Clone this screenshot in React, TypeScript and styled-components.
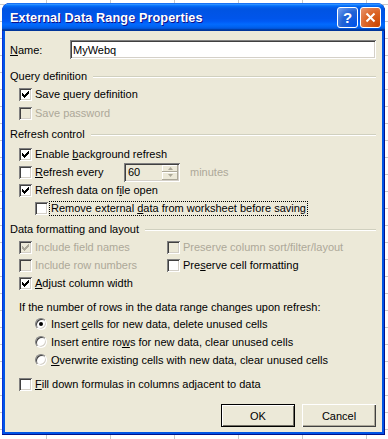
import React from 'react';
import styled, { createGlobalStyle, css } from 'styled-components';

const GlobalStyle = createGlobalStyle`
    html, body {
        margin: 0;
        height: 100%;
    }
    body {
        background-color: #ffffff;
        background-image:
            linear-gradient(to right, #c8c8c8 1px, transparent 1px),
            linear-gradient(to bottom, #c8c8c8 1px, transparent 1px);
        background-size: 64px 17px;
        background-position: 46px 4px;
        font-family: 'Liberation Sans', Arial, sans-serif;
        font-size: 11px;
        color: #000;
    }
`;

const DISABLED = '#aca899';
const FACE = '#ece9d8';

const sunken = css`
    box-shadow:
        inset 1px 1px #808080,
        inset -1px -1px #ffffff,
        inset 2px 2px #404040,
        inset -2px -2px #d4d0c8;
`;

const StyledWindow = styled.div`
    margin: 3px 0 0 2px;
    width: 383px;
    height: 432px;
    box-sizing: border-box;
    display: flex;
    flex-direction: column;
    background: #0055e5;
    border-radius: 8px 8px 0 0;
    padding: 0 3px 3px 3px;
    box-shadow:
        inset -1px -1px #00138c,
        inset 1px 0 #0831d9;
    overflow: hidden;
`;

const StyledTitleBar = styled.div`
    height: 28px;
    margin: 0 -3px;
    padding: 0 4px 0 8px;
    display: flex;
    align-items: center;
    border-radius: 8px 8px 0 0;
    background: linear-gradient(
        to bottom,
        #0058ee 0%,
        #3593ff 4%,
        #288eff 6%,
        #127dff 8%,
        #036ffc 10%,
        #0262ee 14%,
        #0057e5 20%,
        #0054e3 24%,
        #0055eb 56%,
        #005bf5 66%,
        #026afe 76%,
        #0062ef 86%,
        #0052d6 92%,
        #0040ab 94%,
        #003092 100%
    );
`;

const StyledTitle = styled.div`
    flex: 1;
    color: #ffffff;
    font-weight: bold;
    font-size: 12.7px;
    letter-spacing: 0.1px;
    text-shadow: 1px 1px #0f1089;
    margin-top: 1px;
`;

const StyledCaptionButton = styled.div<{ $kind: 'help' | 'close' }>`
    width: 21px;
    height: 21px;
    box-sizing: border-box;
    border: 1px solid #ffffff;
    border-radius: 3px;
    margin-left: 2px;
    display: flex;
    align-items: center;
    justify-content: center;
    color: #ffffff;
    font-weight: bold;
    font-size: 15px;
    background: ${({ $kind }) =>
        $kind === 'close'
            ? 'radial-gradient(circle at 90% 90%, #cc4600 0%, #dc6527 55%, #e58b62 90%)'
            : 'radial-gradient(circle at 90% 90%, #0054e9 0%, #2263d5 55%, #6696eb 90%)'};
`;

const StyledBody = styled.div`
    flex: 1;
    background: ${FACE};
    padding: 9px 6px 5px 5px;
    display: flex;
    flex-direction: column;
`;

const StyledNameRow = styled.div`
    height: 19px;
    display: flex;
    align-items: center;
`;

const StyledNameLabel = styled.span`
    width: 60px;
`;

const StyledTextBox = styled.div`
    flex: 1;
    height: 19px;
    background: #ffffff;
    ${sunken};
    display: flex;
    align-items: center;
    padding-left: 3px;
`;

const StyledGroupHeader = styled.div<{ $top: number }>`
    height: 18px;
    margin-top: ${({ $top }) => $top}px;
    display: flex;
    align-items: center;
    gap: 6px;

    &::after {
        content: '';
        flex: 1;
        height: 0;
        border-top: 1px solid #d0d0bf;
        border-bottom: 1px solid #ffffff;
        margin-top: 2px;
    }
`;

const StyledRow = styled.div<{ $indent?: number; $top?: number; $h?: number }>`
    height: ${({ $h }) => $h ?? 18}px;
    margin-top: ${({ $top }) => $top ?? 0}px;
    padding-left: ${({ $indent }) => $indent ?? 9}px;
    display: flex;
    align-items: center;
`;

const StyledTwoCols = styled.div`
    display: grid;
    grid-template-columns: 157px 1fr;
`;

const StyledBox = styled.span<{ $disabled?: boolean }>`
    width: 13px;
    height: 13px;
    flex: none;
    background: ${({ $disabled }) => ($disabled ? FACE : '#ffffff')};
    ${sunken};
    display: flex;
    align-items: center;
    justify-content: center;
`;

const StyledLabel = styled.span<{ $disabled?: boolean; $width?: number }>`
    margin-left: 3px;
    color: ${({ $disabled }) => ($disabled ? DISABLED : '#000')};
    width: ${({ $width }) => ($width ? `${$width}px` : 'auto')};
    white-space: nowrap;
`;

const StyledFocusLabel = styled.span`
    margin-left: 1px;
    padding: 0 1px 1px 1px;
    border: 1px dotted #000;
    white-space: nowrap;
`;

const StyledRadio = styled.span`
    width: 12px;
    height: 12px;
    flex: none;
    box-sizing: border-box;
    border-radius: 50%;
    background: #ffffff;
    border: 1px solid;
    border-color: #808080 #ffffff #ffffff #808080;
    box-shadow: inset 1px 1px #404040, inset -1px -1px #d4d0c8;
    display: flex;
    align-items: center;
    justify-content: center;
    margin-right: 4px;

    &[data-on='true']::after {
        content: '';
        width: 4px;
        height: 4px;
        border-radius: 50%;
        background: #000;
    }
`;

const StyledSpinner = styled.div`
    width: 56px;
    height: 19px;
    background: ${FACE};
    ${sunken};
    display: flex;
    align-items: center;
    padding: 2px 2px 2px 4px;
    box-sizing: border-box;
`;

const StyledSpinValue = styled.span`
    flex: 1;
`;

const StyledSpinButtons = styled.div`
    width: 16px;
    height: 15px;
    display: flex;
    flex-direction: column;
`;

const StyledSpinButton = styled.div`
    flex: 1;
    background: ${FACE};
    box-shadow: inset -1px -1px #aca899, inset 1px 1px #ffffff;
    display: flex;
    align-items: center;
    justify-content: center;
`;

const StyledMinutes = styled.span`
    margin-left: 10px;
    color: ${DISABLED};
`;

const StyledButtonRow = styled.div`
    margin-top: 11px;
    display: flex;
    justify-content: flex-end;
    gap: 7px;
`;

const StyledButton = styled.div<{ $default?: boolean }>`
    width: 74px;
    height: 23px;
    box-sizing: border-box;
    display: flex;
    align-items: center;
    justify-content: center;
    background: ${FACE};
    ${({ $default }) =>
        $default
            ? css`
                  border: 1px solid #000;
                  box-shadow: inset 1px 1px #ffffff, inset -1px -1px #716f64;
              `
            : css`
                  box-shadow:
                      inset 1px 1px #ffffff,
                      inset -1px -1px #404040,
                      inset -2px -2px #aca899;
              `}
`;

const Check = ({ color = '#000' }: { color?: string }) => (
    <svg width="7" height="7" viewBox="0 0 7 7">
        <path d="M0 2h1v1h1v1h1V3h1V2h1V1h1V0h1v3H6v1H5v1H4v1H3v1H2V6H1V5H0z" fill={color} />
    </svg>
);

const Arrow = ({ up }: { up?: boolean }) => (
    <svg width="5" height="3" viewBox="0 0 5 3">
        <path d={up ? 'M2.5 0L5 3H0z' : 'M0 0h5L2.5 3z'} fill={DISABLED} />
    </svg>
);

interface CheckItemProps {
    checked?: boolean;
    disabled?: boolean;
    indent?: number;
    top?: number;
    children: React.ReactNode;
}

const CheckItem: React.FC<CheckItemProps> = ({ checked, disabled, indent, top, children }) => (
    <StyledRow $indent={indent} $top={top}>
        <StyledBox $disabled={disabled}>
            {checked && <Check color={disabled ? DISABLED : '#000'} />}
        </StyledBox>
        <StyledLabel $disabled={disabled}>{children}</StyledLabel>
    </StyledRow>
);

const RadioItem: React.FC<{ on?: boolean; children: React.ReactNode }> = ({ on, children }) => (
    <StyledRow $indent={25}>
        <StyledRadio data-on={on ? 'true' : 'false'} />
        <span>{children}</span>
    </StyledRow>
);

export default function App() {
    return (
        <>
            <GlobalStyle />
            <StyledWindow>
                <StyledTitleBar>
                    <StyledTitle>External Data Range Properties</StyledTitle>
                    <StyledCaptionButton $kind="help">?</StyledCaptionButton>
                    <StyledCaptionButton $kind="close">
                        <svg width="11" height="11" viewBox="0 0 11 11">
                            <path d="M1.5 1.5l8 8M9.5 1.5l-8 8" stroke="#fff" strokeWidth="2" />
                        </svg>
                    </StyledCaptionButton>
                </StyledTitleBar>

                <StyledBody>
                    <StyledNameRow>
                        <StyledNameLabel>
                            <u>N</u>ame:
                        </StyledNameLabel>
                        <StyledTextBox>MyWebq</StyledTextBox>
                    </StyledNameRow>

                    <StyledGroupHeader $top={8}>Query definition</StyledGroupHeader>
                    <CheckItem checked>
                        Save <u>q</u>uery definition
                    </CheckItem>
                    <CheckItem disabled top={1}>
                        Save password
                    </CheckItem>

                    <StyledGroupHeader $top={3}>Refresh control</StyledGroupHeader>
                    <CheckItem checked top={2}>
                        Enable <u>b</u>ackground refresh
                    </CheckItem>
                    <StyledRow>
                        <StyledBox />
                        <StyledLabel $width={89}>
                            <u>R</u>efresh every
                        </StyledLabel>
                        <StyledSpinner>
                            <StyledSpinValue>60</StyledSpinValue>
                            <StyledSpinButtons>
                                <StyledSpinButton>
                                    <Arrow up />
                                </StyledSpinButton>
                                <StyledSpinButton>
                                    <Arrow />
                                </StyledSpinButton>
                            </StyledSpinButtons>
                        </StyledSpinner>
                        <StyledMinutes>minutes</StyledMinutes>
                    </StyledRow>
                    <CheckItem checked>
                        Refresh data on f<u>i</u>le open
                    </CheckItem>
                    <StyledRow $indent={25}>
                        <StyledBox />
                        <StyledFocusLabel>
                            Remove external <u>d</u>ata from worksheet before saving
                        </StyledFocusLabel>
                    </StyledRow>

                    <StyledGroupHeader $top={3}>Data formatting and layout</StyledGroupHeader>
                    <StyledTwoCols>
                        <CheckItem checked disabled>
                            Include field names
                        </CheckItem>
                        <CheckItem disabled indent={0}>
                            Preserve column sort/filter/layout
                        </CheckItem>
                        <CheckItem disabled>Include row numbers</CheckItem>
                        <CheckItem indent={0}>
                            Pre<u>s</u>erve cell formatting
                        </CheckItem>
                        <CheckItem checked>
                            <u>A</u>djust column width
                        </CheckItem>
                    </StyledTwoCols>

                    <StyledRow $top={6} $h={17}>
                        If the number of rows in the data range changes upon refresh:
                    </StyledRow>
                    <RadioItem on>
                        Insert <u>c</u>ells for new data, delete unused cells
                    </RadioItem>
                    <RadioItem>
                        Insert entire ro<u>w</u>s for new data, clear unused cells
                    </RadioItem>
                    <RadioItem>
                        <u>O</u>verwrite existing cells with new data, clear unused cells
                    </RadioItem>

                    <CheckItem top={6}>
                        <u>F</u>ill down formulas in columns adjacent to data
                    </CheckItem>

                    <StyledButtonRow>
                        <StyledButton $default>OK</StyledButton>
                        <StyledButton>Cancel</StyledButton>
                    </StyledButtonRow>
                </StyledBody>
            </StyledWindow>
        </>
    );
}
